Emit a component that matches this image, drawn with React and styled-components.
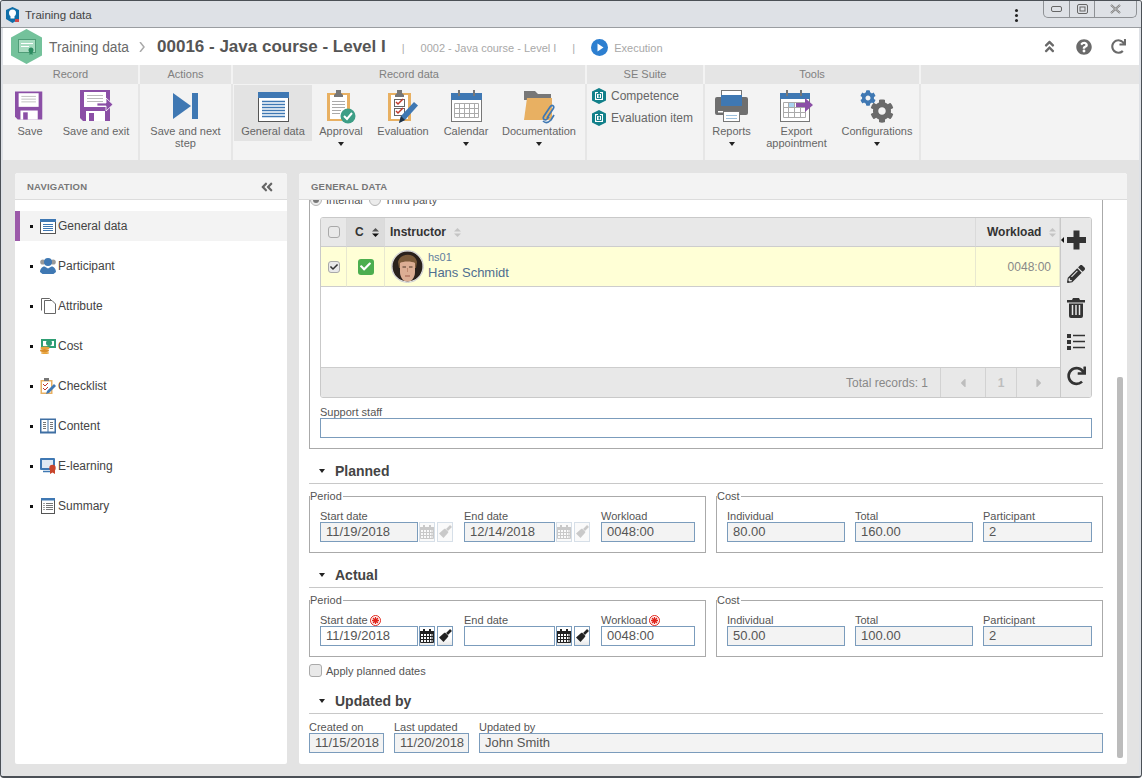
import React from 'react';
import styled, { createGlobalStyle } from 'styled-components';
import {
  FaPencilAlt, FaRedo, FaQuestionCircle,
  FaAngleDoubleUp, FaAngleDoubleLeft, FaCheck, FaCog, FaCaretLeft, FaCaretRight,
} from 'react-icons/fa';

const GlobalStyle = createGlobalStyle`
  html, body { margin: 0; padding: 0; height: 100%; overflow: hidden; }
  body { font-family: "Liberation Sans", Arial, sans-serif; font-size: 12px; color: #444; }
  * { box-sizing: border-box; }
`;

const Window = styled.div`
  width: 1142px; height: 778px; display: flex; flex-direction: column;
  border: 1px solid #4b5056; border-bottom-width: 2px; background: #e3e3e3; border-radius: 3px 3px 4px 4px; overflow: hidden;
`;
const TitleBar = styled.div`
  height: 27px; flex: none; display: flex; align-items: flex-start; background: #dee1e6;
  border-bottom: 1px solid #9a9da1; padding: 0 4px;
`;
const TitleIcon = styled.svg`width: 15px; height: 16px; margin-top: 6px; flex: none;`;
const TitleText = styled.span`margin: 7px 0 0 5px; font-size: 11.5px; line-height: 14px; color: #444; flex: 1;`;
const KebabDots = styled.div`
  display: flex; flex-direction: column; gap: 2px; margin: 8px 25px 0 0;
  & > i { width: 3px; height: 3px; background: #222; display: block; border-radius: 50%; }
`;
const WinControls = styled.div`
  display: flex; height: 17px; border: 1px solid #8e9195; border-top: 0; border-radius: 0 0 5px 5px; background: #dee1e6;
`;
const WinBtn = styled.div`
  width: ${p => p.$w}px; display: flex; align-items: center; justify-content: center;
  border-left: ${p => (p.$first ? 0 : '1px solid #8e9195')}; color: #555;
`;

const Inner = styled.div`flex: 1; display: flex; flex-direction: column; padding: 0 2px; min-height: 0; background: #dee1e6;`;
const Header = styled.div`height: 37px; flex: none; background: #fff; display: flex; align-items: center; padding: 0 0 0 8px; position: relative;`;
const Hex = styled.svg`width: 31px; height: 35px; flex: none; margin-right: 7px; margin-top: -1px;`;
const Crumb = styled.span`font-size: 13.8px; color: #6a6a6a; margin-top: 1px;`;
const CrumbSep = styled.svg`width: 8px; height: 10px; margin: 0 11px 0 9px;`;
const RecordTitle = styled.span`font-size: 17px; font-weight: 700; color: #555;`;
const Pipe = styled.span`font-size: 11px; color: #aaa; margin: 2px 16px 0 16px;`;
const Muted = styled.span`font-size: 11px; color: #a8a8a8; margin-top: 2px;`;
const PlayBadge = styled.svg`width: 17px; height: 17px; margin: 1px 6px 0 0; flex: none;`;
const HeaderTools = styled.div`
  margin-left: auto; display: flex; align-items: center; gap: 19px; padding-right: 13px; color: #6a6a6a; font-size: 16px;
  & svg { display: block; }
`;

const Ribbon = styled.div`height: 95px; flex: none; display: flex; background: #f3f3f3;`;
const Group = styled.div`width: ${p => p.$w ? `${p.$w}px` : 'auto'}; flex: ${p => (p.$w ? 'none' : 1)}; display: flex; flex-direction: column;`;
const GroupTitle = styled.div`
  height: 19px; flex: none; background: #e5e5e5; margin-right: ${p => (p.$last ? 0 : 2)}px; text-align: center;
  font-size: 11px; line-height: 18px; color: #808080;
`;
const GroupBody = styled.div`
  flex: 1; display: flex; padding: 1px 0 0 ${p => p.$pad || 0}px; border-right: ${p => (p.$last ? 0 : '2px solid #e6e6e6')};
`;
const RibbonItem = styled.div`
  width: ${p => p.$w}px; flex: none; display: flex; flex-direction: column; align-items: center; padding-top: 5px;
  height: ${p => (p.$active ? '56px' : 'auto')}; background: ${p => (p.$active ? '#e3e3e3' : 'transparent')};
`;
const IconSlot = styled.div`height: 35px; flex: none; display: flex; align-items: flex-start; justify-content: center;`;
const RibbonLabel = styled.div`font-size: 11px; line-height: 12px; color: #666; text-align: center; white-space: pre-line;`;
const Caret = styled.div`
  width: 0; height: 0; border-left: 3.5px solid transparent; border-right: 3.5px solid transparent;
  border-top: 4px solid #222; margin-top: ${p => p.$mt ?? 5}px; flex: none;
`;
const SuiteList = styled.div`display: flex; flex-direction: column; gap: 6px; padding-top: 3px;`;
const SuiteLink = styled.div`display: flex; align-items: center; gap: 5px; font-size: 12px; line-height: 16px; color: #666;`;

const Body = styled.div`flex: 1; min-height: 0; display: flex; gap: 12px; padding: 13px 12px 12px; background: #e3e3e3;`;
const Panel = styled.section`
  background: #fff; border-radius: 3px 3px 2px 2px; display: flex; flex-direction: column; min-height: 0; position: relative; overflow: hidden;
  width: ${p => p.$w}px; flex: none;
`;
const PanelHead = styled.div`
  height: 27px; flex: none; background: #f3f3f3; border-bottom: 1px solid #dcdcdc; display: flex; align-items: center; justify-content: space-between;
  padding: 1px 13px 0 12px; font-size: 9.5px; font-weight: 700; color: #777; letter-spacing: .2px; position: relative; z-index: 2;
`;
const NavList = styled.div`display: flex; flex-direction: column; padding-top: 11px;`;
const NavRow = styled.div`
  height: 30px; flex: none; margin-bottom: 10px; display: flex; align-items: center; padding-left: ${p => (p.$active ? 10 : 15)}px;
  background: ${p => (p.$active ? '#f3f3f3' : 'transparent')};
  border-left: ${p => (p.$active ? '5px solid #9b59a9' : '0')};
  font-size: 12px; color: #444;
`;
const Bullet = styled.i`width: 3px; height: 3px; background: #111; margin-right: 7px; display: block; flex: none;`;
const NavIcon = styled.svg`width: 16px; height: 16px; margin-right: 2px; flex: none;`;

const Scroll = styled.div`flex: 1; min-height: 0; overflow: hidden; padding: 0 24px 0 10px;`;
const ScrollThumb = styled.div`position: absolute; right: 4px; top: 204px; width: 6px; height: 381px; background: #bcbcbc; border-radius: 2px;`;

const InstructorBox = styled.div`
  margin-top: -7px; border: 1px solid #aaa; border-top: 0; padding: 0 10px 10px;
`;
const RadioRow = styled.div`height: 14px; margin: 0 0 10px -10px; display: flex; align-items: center; font-size: 11px; color: #555;`;
const Radio = styled.span`
  width: 12px; height: 12px; border-radius: 50%; border: 1px solid #b5b5b5; background: #ececec; margin-right: 4px; flex: none;
  display: flex; align-items: center; justify-content: center;
  &::after { content: ''; width: 6px; height: 6px; border-radius: 50%; background: ${p => (p.$on ? '#777' : 'transparent')}; }
`;
const RadioText = styled.span`margin-right: 6px;`;
const GridWrap = styled.div`display: flex; height: 181px; border: 1px solid #c9c9c9; border-radius: 3px; overflow: hidden;`;
const GridMain = styled.div`flex: 1; display: flex; flex-direction: column; min-width: 0;`;
const Cols = styled.div`display: grid; grid-template-columns: 26px 38px 1fr 84px; flex: none;`;
const HeadCell = styled.div`
  height: 29px; border-bottom: 1px solid #cdcdcd; border-right: 1px solid #dadada; background: ${p => (p.$sorted ? '#dcdcdc' : '#e8e8e8')};
  display: flex; align-items: center; padding-left: ${p => p.$pl ?? 0}px; justify-content: ${p => (p.$center ? 'center' : 'flex-start')};
  font-size: 12px; font-weight: 700; color: #333;
`;
const RowCell = styled.div`
  height: 40px; border-bottom: 1px solid #cdcdcd; border-right: 1px solid #e8e8d0; background: #ffffd6;
  display: flex; align-items: center; padding: 0 ${p => p.$pr ?? 0}px 0 ${p => p.$pl ?? 0}px; justify-content: ${p => p.$align || 'flex-start'};
  color: #888; font-size: 12px;
`;
const Check = styled.span`
  width: 12px; height: 12px; border: 1px solid #a9a9a9; border-radius: 3px; background: #e9e9e9; display: flex; align-items: center; justify-content: center;
  flex: none; color: #333; font-size: 8px;
`;
const GreenCheck = styled.span`
  width: 16px; height: 16px; border-radius: 3px; background: #4cae4f; color: #fff; display: flex; align-items: center; justify-content: center; font-size: 11px;
`;
const SortMark = styled.svg`width: 7px; height: 9px; margin-left: 8px; flex: none;`;
const Avatar = styled.svg`width: 33px; height: 33px; flex: none; margin-right: 4px;`;
const PersonBlock = styled.div`padding-bottom: 3px;`;
const PersonId = styled.div`font-size: 11px; line-height: 12px; color: #5f7d9f;`;
const PersonName = styled.div`font-size: 13px; line-height: 15px; color: #4f6e90; margin-top: 2px;`;
const GridEmpty = styled.div`flex: 1; background: #fff;`;
const GridFoot = styled.div`
  height: 30px; flex: none; background: #e8e8e8; border-top: 1px solid #cdcdcd; display: flex; justify-content: flex-end; align-items: stretch;
  color: #888; font-size: 12px;
`;
const FootTotal = styled.div`display: flex; align-items: center; padding-right: 12px;`;
const PagerCell = styled.div`
  width: ${p => p.$w}px; border-left: 1px solid #d2d2d2; display: flex; align-items: center; justify-content: center; color: #bdbdbd; font-weight: 700; font-size: 12px;
`;
const GridTools = styled.div`
  width: 31px; flex: none; background: #e8e8e8; border-left: 1px solid #c9c9c9; display: flex; flex-direction: column; align-items: center;
  padding-top: 12px; gap: 14px; color: #333; position: relative;
  & > svg { display: block; height: 20px; }
`;
const CollapseTip = styled.i`
  position: absolute; left: 0; top: 19px; width: 0; height: 0; border-top: 3px solid transparent; border-bottom: 3px solid transparent; border-right: 3px solid #111;
`;

const SmallLabel = styled.div`
  font-size: 11px; line-height: 12px; color: #555; white-space: nowrap; display: flex; align-items: center; gap: 2px; height: 12px;
`;
const Support = styled.div`margin-top: 8px;`;
const ValueBox = styled.div`
  width: ${p => (p.$w ? `${p.$w}px` : 'auto')}; flex: ${p => (p.$w ? 'none' : 1)}; height: 20px; border: 1px solid #7b9cbc;
  background: ${p => (p.$off ? '#f3f3f3' : '#fff')}; font-size: 13px; line-height: 18px; padding-left: ${p => p.$pl ?? 5}px; color: #555; white-space: nowrap; overflow: hidden;
`;
const SectionHead = styled.div`
  margin-top: 12px; height: 23px; border-bottom: 1px solid #c8c8c8; display: flex; align-items: center; padding: 0 0 2px 10px;
  font-size: 14px; font-weight: 700; color: #444;
`;
const SectionCaret = styled.i`
  width: 0; height: 0; border-left: 3.5px solid transparent; border-right: 3.5px solid transparent; border-top: 4px solid #222; margin-right: 10px; display: block;
`;
const FieldsetRow = styled.div`display: flex; gap: 10px; margin-top: 6px;`;
const Group2 = styled.fieldset`
  width: ${p => p.$w}px; flex: none; margin: 0; min-width: 0; border: 1px solid #aaa; padding: 8px 10px 10px; display: block;
  & > legend { font-size: 11px; line-height: 12px; padding: 0 1px 0 0; margin-left: -10px; color: #555; }
`;
const FieldRow = styled.div`display: flex; gap: ${p => p.$gap ?? 10}px;`;
const Field = styled.div`display: flex; flex-direction: column; flex: ${p => (p.$grow ? 1 : 'none')}; min-width: 0;`;
const InputLine = styled.div`display: flex; gap: 2px; &> :first-child { margin-right: -1px; }`;
const DateBtn = styled.div`
  width: 16px; height: 20px; flex: none; display: flex; align-items: center; justify-content: center;
  border: 1px solid ${p => (p.$off ? '#d6dfe8' : '#7b9cbc')}; color: ${p => (p.$off ? '#c9c9c9' : '#222')};
  background: ${p => (p.$off ? '#fafafa' : 'linear-gradient(#fff 60%, #e8e8e8)')};
  & svg { display: block; }
`;
const Required = styled.svg`width: 11px; height: 11px; flex: none;`;
const ApplyRow = styled.div`display: flex; align-items: center; gap: 4px; margin-top: 6px; font-size: 11px; color: #555; height: 16px; padding-bottom: 1px;`;
const BigCheck = styled.span`width: 13px; height: 13px; border: 1px solid #aaa; border-radius: 3px; background: #e9e9e9; flex: none;`;
const UpdatedRow = styled.div`display: flex; gap: 10px; margin-top: 7px;`;

/* ---------- drawings ---------- */
const Floppy = ({ arrow }) => (
  <svg width={arrow ? 33 : 30} height="31" viewBox="0 0 33 31">
    <path d="M0 0h30v31H3l-3-3z" fill="#8b4fa6" />
    <rect x="4" y="2" width="22" height="15" fill="#fff" />
    <path d="M7 5.500h16M7 8.500h16M7 11.500h16" stroke="#bbb" strokeWidth="1" />
    <rect x="6" y="21" width="19" height="10" fill="#fff" />
    <rect x="9" y="23" width="5" height="8" fill="#8b4fa6" />
    {arrow && <path d="M17 13h9V8l7 6.500-7 6.500v-5h-9z" fill="#8b4fa6" stroke="#fff" strokeWidth=".8" />}
  </svg>
);
const NextStepSvg = styled.svg`margin-top: 2px;`;
const NextStep = () => (
  <NextStepSvg width="26" height="28" viewBox="0 0 26 28">
    <path d="M0 1l18 13L0 27z" fill="#3f78b3" /><rect x="19" y="1" width="6" height="26" fill="#3f78b3" />
  </NextStepSvg>
);
const WindowDoc = () => (
  <NextStepSvg width="31" height="30" viewBox="0 0 31 30">
    <rect x=".5" y=".5" width="30" height="29" fill="#fff" stroke="#555" />
    <rect x="0" y="0" width="31" height="6" fill="#3f78b3" />
    <path d="M4 9.500h23M4 12.500h23M4 15.500h23M4 18.500h23M4 21.500h23M4 24.500h23" stroke="#3f78b3" strokeWidth="1.500" />
  </NextStepSvg>
);
const Clipboard = () => (
  <>
    <rect x="1" y="3" width="23" height="28" fill="#e8b062" />
    <rect x="4" y="5" width="17" height="24" fill="#fff" />
    <path d="M8 5l2-2V0h5v3l2 2v2H8z" fill="#777" />
  </>
);
const Approval = () => (
  <svg width="30" height="34" viewBox="0 0 30 34">
    <Clipboard />
    <path d="M6 11.500h13M6 14.500h13M6 17.500h13M6 20.500h9M6 23.500h8" stroke="#aaa" />
    <circle cx="22" cy="26" r="7.500" fill="#3d9e86" />
    <path d="M18 26l3 3 5-6" fill="none" stroke="#fff" strokeWidth="2" />
  </svg>
);
const Evaluation = () => (
  <svg width="32" height="34" viewBox="0 0 32 34">
    <Clipboard />
    <rect x="7.500" y="9.500" width="10" height="7" fill="#fff" stroke="#666" /><rect x="7.500" y="18.500" width="10" height="7" fill="#fff" stroke="#666" />
    <path d="M9 12l2 2 5-5M9 21l2 2 5-5" fill="none" stroke="#c0392b" strokeWidth="1.500" />
    <path d="M12 33l2-7L27 12l4 3.500L18 30z" fill="#3f78b3" /><path d="M12 33l2-7 4 4z" fill="#234" />
  </svg>
);
const Calendar = () => (
  <svg width="31" height="32" viewBox="0 0 31 32">
    <rect x=".5" y="3.500" width="30" height="28" fill="#fff" stroke="#777" />
    <rect x="0" y="3" width="31" height="7" fill="#3f78b3" />
    <rect x="7" y="0" width="2" height="6" fill="#777" /><rect x="22" y="0" width="2" height="6" fill="#777" />
    <path d="M3.500 13.500h24v14h-24zM3.500 18.500h24M3.500 23.500h24M8.500 13.500v14M13.500 13.500v14M18.500 13.500v14M23.500 13.500v14" fill="none" stroke="#aaa" />
  </svg>
);
const ExportCal = () => (
  <svg width="33" height="32" viewBox="0 0 33 32">
    <rect x=".5" y="3.500" width="29" height="28" fill="#fff" stroke="#777" />
    <rect x="0" y="3" width="30" height="6" fill="#3f78b3" />
    <rect x="6" y="0" width="2" height="6" fill="#777" /><rect x="20" y="0" width="2" height="6" fill="#777" />
    <path d="M3.500 12.500h22v15h-22zM3.500 17.500h22M3.500 22.500h22M8.500 12.500v15M14.500 12.500v15M20.500 12.500v15" fill="none" stroke="#aaa" />
    <rect x="9" y="13" width="5" height="4" fill="#a9d3ef" />
    <path d="M16 13h9V8l8 7-8 7v-5h-9z" fill="#8b4fa6" />
  </svg>
);
const Folder = () => (
  <svg width="31" height="34" viewBox="0 0 31 34">
    <path d="M0 1h11l3 3h13v6H0z" fill="#777" />
    <path d="M3 8h25v22H0z" fill="#e8b062" />
    <path d="M25 27l-2 2c-2 2-5 0-3-3l6-9c2-3 5-1 3 2l-6 9" fill="none" stroke="#3f78b3" strokeWidth="1.700" />
    <path d="M19 31c3 3 6 1 8-1l3-5" fill="none" stroke="#3f78b3" strokeWidth="1.700" />
  </svg>
);
const Printer = () => (
  <svg width="33" height="32" viewBox="0 0 33 32">
    <rect x="6.500" y=".5" width="20" height="7" fill="#fff" stroke="#777" />
    <path d="M2 7h29a2 2 0 0 1 2 2v14a2 2 0 0 1-2 2H2a2 2 0 0 1-2-2V9a2 2 0 0 1 2-2z" fill="#6f6f6f" />
    <rect x="6" y="5" width="21" height="11" fill="#3f78b3" />
    <rect x="3" y="21" width="5" height="1.500" fill="#fff" />
    <rect x="8.500" y="21.500" width="16" height="10" fill="#fff" stroke="#777" />
    <path d="M11 25.500h11M11 28.500h11" stroke="#9cc0dd" />
  </svg>
);
const GearWrap = styled.div`
  width: 34px; height: 34px; position: relative;
  & > svg { position: absolute; left: 0; top: 0; }
`;
const BigGear = styled.div`position: absolute; right: 0; bottom: 1px; line-height: 0;`;
const Gears = () => (
  <GearWrap>
    <FaCog size={16} color="#3f78b3" />
    <BigGear><FaCog size={24} color="#6a6a6a" /></BigGear>
  </GearWrap>
);
const SuiteHex = () => (
  <svg width="14" height="16" viewBox="0 0 14 16">
    <path d="M7 0l7 3.500v9L7 16 0 12.500v-9z" fill="#12808a" />
    <rect x="3" y="4" width="8" height="8" fill="#fff" /><path d="M4.500 5.500h5v5h-5z" fill="none" stroke="#12808a" />
    <path d="M6 3h2v2H6zM6.500 6.500h1.500v3H6.500z" fill="#12808a" />
  </svg>
);
const Required2 = () => (
  <Required viewBox="0 0 11 11">
    <circle cx="5.500" cy="5.500" r="5" fill="none" stroke="#e0241b" />
    <path d="M5.500 2v7M2 5.500h7M3 3l5 5M8 3l-5 5" stroke="#e0241b" strokeWidth="1.300" />
  </Required>
);
const SortBoth = ({ dark }) => (
  <SortMark viewBox="0 0 7 9">
    <path d="M3.500 0L7 3.500H0z" fill={dark ? '#555' : '#c4c4c4'} />
    <path d="M3.500 9L0 5.500h7z" fill={dark ? '#111' : '#c4c4c4'} />
  </SortMark>
);
const CalMini = () => (
  <svg width="14" height="14" viewBox="0 0 14 14">
    <path d="M3 0h2v2H3zM9 0h2v2H9z" fill="currentColor" />
    <rect x="0" y="2" width="14" height="3" fill="currentColor" />
    <path d="M.5 4.500h13v9H.5zM.5 7.500h13M.5 10.500h13M3.500 4.500v9M6.500 4.500v9M9.500 4.500v9M12 4.500v9" fill="none" stroke="currentColor" />
  </svg>
);
const BroomMini = () => (
  <svg width="14" height="14" viewBox="0 0 14 14">
    <path d="M9 5l4-4" stroke="currentColor" strokeWidth="2.600" />
    <path d="M7 3.500l3.500 3.500-1 1.500L5.500 13 1 8.500 5.500 4.500z" fill="currentColor" />
  </svg>
);
const PlusTool = () => (
  <svg width="19" height="19" viewBox="0 0 19 19"><path d="M6.500 0h6v6.500H19v6h-6.500V19h-6v-6.500H0v-6h6.500z" fill="currentColor" /></svg>
);
const TrashTool = () => (
  <svg width="18" height="20" viewBox="0 0 18 20">
    <path d="M6 0h6l1 2h5v2.500H0V2h5z" fill="currentColor" />
    <path d="M2 5.500h14V18a2 2 0 0 1-2 2H4a2 2 0 0 1-2-2z" fill="currentColor" />
    <path d="M5.500 7v10M9 7v10M12.500 7v10" stroke="#e8e8e8" strokeWidth="1.500" />
  </svg>
);
const ListTool = () => (
  <svg width="18" height="18" viewBox="0 0 18 18">
    <rect x="0" y="1" width="4" height="4" fill="currentColor" /><rect x="0" y="7" width="4" height="4" fill="currentColor" /><rect x="0" y="13" width="4" height="4" fill="currentColor" />
    <path d="M6 2.500h12M6 8.500h12M6 14.500h12" stroke="currentColor" strokeWidth="1.300" />
  </svg>
);

const navIcons = {
  general: <><rect x=".5" y="1.500" width="15" height="14" fill="#fff" stroke="#555" /><rect y="1" width="16" height="3" fill="#3f78b3" /><path d="M3 6.500h10M3 8.500h10M3 10.500h10M3 12.500h10" stroke="#3f78b3" /></>,
  participant: <><circle cx="2.800" cy="4" r="2.600" fill="#999" /><circle cx="13.200" cy="4" r="2.600" fill="#999" /><circle cx="8" cy="4" r="4" fill="#3f78b3" /><path d="M0 14c0-3 2-5.500 4.500-5.500L8 10.500l3.500-2C14 8.500 16 11 16 14l-2.500 2h-11z" fill="#3f78b3" /></>,
  attribute: <><path d="M4.500 2.500V15.500H15.500V6l-3.500-3.500z" fill="#fff" stroke="#666" /><path d="M1.500 12.500V.5h8l2 2" fill="none" stroke="#666" /></>,
  cost: <><rect x="1" y="1" width="15" height="9" fill="#2f9e73" /><rect x="3" y="3" width="11" height="5" fill="#fff" /><circle cx="9" cy="5" r="3" fill="#2f9e73" /><ellipse cx="5" cy="10" rx="4.500" ry="1.500" fill="#e8a33b" /><ellipse cx="4.500" cy="12.500" rx="4.500" ry="1.500" fill="#d98e2b" /><ellipse cx="5" cy="15" rx="4" ry="1" fill="#e8a33b" /></>,
  checklist: <><rect x="0.500" y="2" width="12" height="14" fill="#e8b062" /><rect x="2" y="3.500" width="9" height="11" fill="#fff" /><path d="M4 0h5v3H4z" fill="#777" /><path d="M3 6l2 2 3-3M3 10l2 2 3-3" fill="none" stroke="#c0392b" /><path d="M6 16l1-3 7-7 2 2-7 7z" fill="#3f78b3" /></>,
  content: <><rect width="16" height="15" fill="#3f6fa3" y=".5" /><rect x="1.500" y="2" width="6" height="11.500" fill="#fff" /><rect x="8.500" y="2" width="6" height="11.500" fill="#fff" /><path d="M3 4.500h3M3 6.500h3M3 8.500h3M3 10.500h3M10 4.500h3M10 6.500h3M10 8.500h3M10 10.500h3" stroke="#777" /></>,
  elearning: <><rect x="0" y="0" width="15" height="12" rx="1" fill="#3f78b3" /><rect x="2" y="2" width="11" height="8" fill="#dfe9f3" /><path d="M3 13.500h7" stroke="#3f78b3" strokeWidth="1.500" /><circle cx="12.500" cy="10" r="3.200" fill="#c8452c" /><path d="M10 12v4l2.500-1.500L15 16v-4z" fill="#c8452c" /></>,
  summary: <><rect x="1.500" y=".5" width="13" height="15" fill="#fff" stroke="#555" /><rect x="1" y="0" width="14" height="2.500" fill="#3f78b3" /><path d="M3.500 5.500h1M3.500 7.500h1M3.500 9.500h1M3.500 11.500h1" stroke="#444" /><path d="M6 5.500h7M6 7.500h7M6 9.500h7M6 11.500h7" stroke="#777" /></>,
};

const navItems = [
  ['General data', 'general'], ['Participant', 'participant'], ['Attribute', 'attribute'], ['Cost', 'cost'],
  ['Checklist', 'checklist'], ['Content', 'content'], ['E-learning', 'elearning'], ['Summary', 'summary'],
];

const DateField = ({ label, value, w, off, required }) => (
  <Field>
    <SmallLabel>{label}{required && <Required2 />}</SmallLabel>
    <InputLine>
      <ValueBox $w={w} $off={off}>{value}</ValueBox>
      <DateBtn $off={off}><CalMini /></DateBtn>
      <DateBtn $off={off}><BroomMini /></DateBtn>
    </InputLine>
  </Field>
);
const TextField = ({ label, value, w, off = true, required }) => (
  <Field>
    <SmallLabel>{label}{required && <Required2 />}</SmallLabel>
    <ValueBox $w={w} $off={off}>{value}</ValueBox>
  </Field>
);
const PeriodCost = ({ live, startVal, endVal, individual, total }) => (
  <FieldsetRow>
    <Group2 $w={397}>
      <legend>Period</legend>
      <FieldRow $gap={11}>
        <DateField label="Start date" value={startVal} w={98} off={!live} required={live} />
        <DateField label="End date" value={endVal} w={91} off={!live} />
        <TextField label="Workload" value="0048:00" w={94} off={!live} required={live} />
      </FieldRow>
    </Group2>
    <Group2 $w={387}>
      <legend>Cost</legend>
      <FieldRow>
        <TextField label="Individual" value={individual} w={118} />
        <TextField label="Total" value={total} w={118} />
        <TextField label="Participant" value="2" w={109} />
      </FieldRow>
    </Group2>
  </FieldsetRow>
);
const Section = ({ children }) => <SectionHead><SectionCaret />{children}</SectionHead>;

export default function App() {
  return (
    <>
      <GlobalStyle />
      <Window>
        <TitleBar>
          <TitleIcon viewBox="0 0 15 16">
            <path d="M7.500 0L14 3v9l-6.500 4L1 12V3z" fill="#0f6ea8" />
            <circle cx="7.500" cy="6" r="3.500" fill="#fff" /><rect x="5.500" y="9" width="4" height="2.500" fill="#fff" />
            <rect x="10" y="12" width="4" height="3" fill="#d04a4a" />
          </TitleIcon>
          <TitleText>Training data</TitleText>
          <KebabDots><i /><i /><i /></KebabDots>
          <WinControls>
            <WinBtn $w={25} $first><svg width="11" height="6"><rect x=".5" y=".5" width="10" height="5" rx="1.500" fill="none" stroke="#666" /></svg></WinBtn>
            <WinBtn $w={25}><svg width="11" height="10"><rect x=".5" y=".5" width="10" height="9" rx="1.500" fill="none" stroke="#666" /><rect x="3" y="3" width="5" height="4" fill="none" stroke="#666" /></svg></WinBtn>
            <WinBtn $w={42}><svg width="11" height="10"><path d="M1 1l9 8M10 1l-9 8" stroke="#777" strokeWidth="2" /><path d="M1 1l9 8M10 1l-9 8" stroke="#eee" strokeWidth=".6" /></svg></WinBtn>
          </WinControls>
        </TitleBar>
        <Inner>
          <Header>
            <Hex viewBox="0 0 31 35">
              <path d="M15.500 0L31 8.500v18L15.500 35 0 26.500v-18z" fill="#74c29b" />
              <rect x="7.500" y="10.500" width="17" height="13" fill="#a9dcc1" stroke="#4f9c77" />
              <path d="M10 14.500h12M10 17.500h8" stroke="#fff" />
              <circle cx="20" cy="21" r="2.500" fill="#2b8a5f" /><path d="M18.500 22v4l1.500-1 1.500 1v-4z" fill="#2b8a5f" />
            </Hex>
            <Crumb>Training data</Crumb>
            <CrumbSep viewBox="0 0 8 10"><path d="M2 0l4 5-4 5" fill="none" stroke="#aaa" strokeWidth="1.500" /></CrumbSep>
            <RecordTitle>00016 - Java course - Level I</RecordTitle>
            <Pipe>|</Pipe>
            <Muted>0002 - Java course - Level I</Muted>
            <Pipe>|</Pipe>
            <PlayBadge viewBox="0 0 17 17"><circle cx="8.500" cy="8.500" r="8.500" fill="#2d7fd0" /><path d="M6.500 4.500l6 4-6 4z" fill="#fff" /></PlayBadge>
            <Muted>Execution</Muted>
            <HeaderTools>
              <FaAngleDoubleUp size={15} />
              <FaQuestionCircle size={16} />
              <FaRedo size={15} />
            </HeaderTools>
          </Header>
          <Ribbon>
            <Group $w={137}>
              <GroupTitle>Record</GroupTitle>
              <GroupBody>
                <RibbonItem $w={54}><IconSlot><Floppy /></IconSlot><RibbonLabel>Save</RibbonLabel></RibbonItem>
                <RibbonItem $w={78}><IconSlot><Floppy arrow /></IconSlot><RibbonLabel>Save and exit</RibbonLabel></RibbonItem>
              </GroupBody>
            </Group>
            <Group $w={93}>
              <GroupTitle>Actions</GroupTitle>
              <GroupBody>
                <RibbonItem $w={91}><IconSlot><NextStep /></IconSlot><RibbonLabel>{'Save and next\nstep'}</RibbonLabel></RibbonItem>
              </GroupBody>
            </Group>
            <Group $w={354}>
              <GroupTitle>Record data</GroupTitle>
              <GroupBody $pad={1}>
                <RibbonItem $w={78} $active><IconSlot><WindowDoc /></IconSlot><RibbonLabel>General data</RibbonLabel></RibbonItem>
                <RibbonItem $w={58}><IconSlot><Approval /></IconSlot><RibbonLabel>Approval</RibbonLabel><Caret /></RibbonItem>
                <RibbonItem $w={66}><IconSlot><Evaluation /></IconSlot><RibbonLabel>Evaluation</RibbonLabel></RibbonItem>
                <RibbonItem $w={60}><IconSlot><Calendar /></IconSlot><RibbonLabel>Calendar</RibbonLabel><Caret /></RibbonItem>
                <RibbonItem $w={86}><IconSlot><Folder /></IconSlot><RibbonLabel>Documentation</RibbonLabel><Caret /></RibbonItem>
              </GroupBody>
            </Group>
            <Group $w={118}>
              <GroupTitle>SE Suite</GroupTitle>
              <GroupBody $pad={5}>
                <SuiteList>
                  <SuiteLink><SuiteHex />Competence</SuiteLink>
                  <SuiteLink><SuiteHex />Evaluation item</SuiteLink>
                </SuiteList>
              </GroupBody>
            </Group>
            <Group $w={216}>
              <GroupTitle>Tools</GroupTitle>
              <GroupBody>
                <RibbonItem $w={53}><IconSlot><Printer /></IconSlot><RibbonLabel>Reports</RibbonLabel><Caret /></RibbonItem>
                <RibbonItem $w={77}><IconSlot><ExportCal /></IconSlot><RibbonLabel>{'Export\nappointment'}</RibbonLabel></RibbonItem>
                <RibbonItem $w={84}><IconSlot><Gears /></IconSlot><RibbonLabel>Configurations</RibbonLabel><Caret /></RibbonItem>
              </GroupBody>
            </Group>
            <Group>
              <GroupTitle $last />
              <GroupBody $last />
            </Group>
          </Ribbon>
          <Body>
            <Panel $w={272}>
              <PanelHead>NAVIGATION<FaAngleDoubleLeft size={14} color="#666" /></PanelHead>
              <NavList>
                {navItems.map(([label, key], i) => (
                  <NavRow key={key} $active={i === 0}>
                    <Bullet />
                    <NavIcon viewBox="0 0 16 16">{navIcons[key]}</NavIcon>
                    {label}
                  </NavRow>
                ))}
              </NavList>
            </Panel>
            <Panel $w={828}>
              <PanelHead>GENERAL DATA</PanelHead>
              <Scroll>
                <InstructorBox>
                  <RadioRow>
                    <Radio $on /><RadioText>Internal</RadioText>
                    <Radio /><RadioText>Third party</RadioText>
                  </RadioRow>
                  <GridWrap>
                    <GridMain>
                      <Cols>
                        <HeadCell $center><Check /></HeadCell>
                        <HeadCell $sorted $pl={8}>C<SortBoth dark /></HeadCell>
                        <HeadCell $pl={5}>Instructor<SortBoth /></HeadCell>
                        <HeadCell $pl={11}>Workload<SortBoth /></HeadCell>
                        <RowCell $align="center"><Check><FaCheck /></Check></RowCell>
                        <RowCell $align="center"><GreenCheck><FaCheck /></GreenCheck></RowCell>
                        <RowCell $pl={6}>
                          <Avatar viewBox="0 0 33 33">
                            <defs><clipPath id="face"><circle cx="16.500" cy="16.500" r="15" /></clipPath></defs>
                            <circle cx="16.500" cy="16.500" r="16" fill="#fff" stroke="#ccc" />
                            <g clipPath="url(#face)">
                              <rect width="33" height="33" fill="#2a211c" />
                              <path d="M7 12c2-9 17-10 19 0l-1 6H8z" fill="#7a5a3a" />
                              <path d="M9 13c3-2 12-2 15 0v9c0 6-4 10-7.500 10S9 28 9 22z" fill="#dcae94" />
                              <path d="M11.500 17h3.500M18 17h3.500" stroke="#4a3527" strokeWidth="1.200" />
                              <path d="M16.500 18v4" stroke="#bf8a70" strokeWidth="1" />
                              <path d="M14 26h5" stroke="#9c5d4d" strokeWidth="1" />
                            </g>
                          </Avatar>
                          <PersonBlock>
                            <PersonId>hs01</PersonId>
                            <PersonName>Hans Schmidt</PersonName>
                          </PersonBlock>
                        </RowCell>
                        <RowCell $align="flex-end" $pr={8}>0048:00</RowCell>
                      </Cols>
                      <GridEmpty />
                      <GridFoot>
                        <FootTotal>Total records: 1</FootTotal>
                        <PagerCell $w={45}><FaCaretLeft size={14} /></PagerCell>
                        <PagerCell $w={31}>1</PagerCell>
                        <PagerCell $w={44}><FaCaretRight size={14} /></PagerCell>
                      </GridFoot>
                    </GridMain>
                    <GridTools>
                      <CollapseTip />
                      <PlusTool />
                      <FaPencilAlt size={18} />
                      <TrashTool />
                      <ListTool />
                      <FaRedo size={19} />
                    </GridTools>
                  </GridWrap>
                  <Support>
                    <SmallLabel>Support staff</SmallLabel>
                    <ValueBox />
                  </Support>
                </InstructorBox>
                <Section>Planned</Section>
                <PeriodCost startVal="11/19/2018" endVal="12/14/2018" individual="80.00" total="160.00" />
                <Section>Actual</Section>
                <PeriodCost live startVal="11/19/2018" endVal="" individual="50.00" total="100.00" />
                <ApplyRow><BigCheck />Apply planned dates</ApplyRow>
                <Section>Updated by</Section>
                <UpdatedRow>
                  <TextField label="Created on" value="11/15/2018" w={75} />
                  <TextField label="Last updated" value="11/20/2018" w={75} />
                  <Field $grow>
                    <SmallLabel>Updated by</SmallLabel>
                    <ValueBox $off>John Smith</ValueBox>
                  </Field>
                </UpdatedRow>
              </Scroll>
              <ScrollThumb />
            </Panel>
          </Body>
        </Inner>
      </Window>
    </>
  );
}
